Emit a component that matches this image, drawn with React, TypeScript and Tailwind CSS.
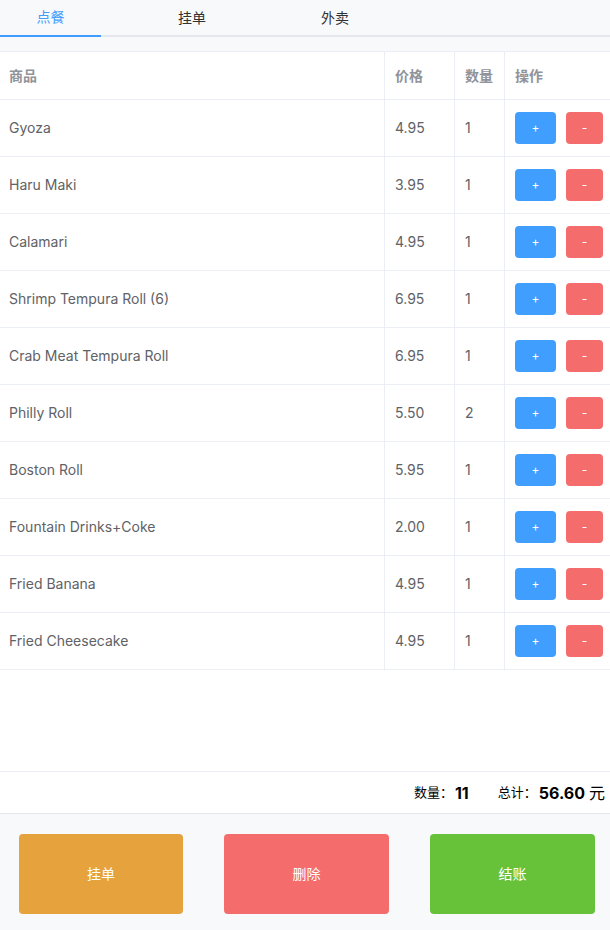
import { useState } from 'react';

interface Item {
    name: string;
    price: string;
    count: number;
}

const initialItems: Item[] = [
    { name: 'Gyoza', price: '4.95', count: 1 },
    { name: 'Haru Maki', price: '3.95', count: 1 },
    { name: 'Calamari', price: '4.95', count: 1 },
    { name: 'Shrimp Tempura Roll (6)', price: '6.95', count: 1 },
    { name: 'Crab Meat Tempura Roll', price: '6.95', count: 1 },
    { name: 'Philly Roll', price: '5.50', count: 2 },
    { name: 'Boston Roll', price: '5.95', count: 1 },
    { name: 'Fountain Drinks+Coke', price: '2.00', count: 1 },
    { name: 'Fried Banana', price: '4.95', count: 1 },
    { name: 'Fried Cheesecake', price: '4.95', count: 1 },
];

const tabs = [
    { label: '点餐', width: 'w-[101px]' },
    { label: '挂单', width: 'w-[182px]' },
    { label: '外卖', width: 'w-[104px]' },
];

export default function App() {
    const [items] = useState<Item[]>(initialItems);
    const [active] = useState(0);

    const totalCount = items.reduce((s, i) => s + i.count, 0);
    const totalPrice = items.reduce((s, i) => s + i.count * parseFloat(i.price), 0);

    return (
        <div
            className="w-[610px] h-[930px] flex flex-col bg-[#f8f9fb] overflow-hidden"
            style={{ fontFamily: 'Inter, "Noto Sans CJK SC", sans-serif' }}
        >
            {/* Tabs */}
            <div className="flex h-[37px] border-b-2 border-[#e4e7ed]">
                {tabs.map((t, i) => (
                    <div
                        key={t.label}
                        className={`-mb-[2px] h-[37px] pb-[2px] flex items-center justify-center text-sm ${t.width} ${
                            i === active
                                ? 'text-[#409eff] border-b-2 border-[#409eff]'
                                : 'text-[#303133]'
                        }`}
                    >
                        {t.label}
                    </div>
                ))}
            </div>

            {/* Order table */}
            <div className="mt-[14px] bg-white border-t border-[#ebeef5] flex-1 flex flex-col">
                <div className="grid grid-cols-[385px_70px_50px_105px] h-[48px] border-b border-[#ebeef5] text-sm font-bold text-[#909399]">
                    <div className="flex items-center pl-[9px] border-r border-[#ebeef5]">商品</div>
                    <div className="flex items-center pl-[10px] border-r border-[#ebeef5]">价格</div>
                    <div className="flex items-center pl-[10px] border-r border-[#ebeef5]">数量</div>
                    <div className="flex items-center pl-[10px]">操作</div>
                </div>
                {items.map((item) => (
                    <div
                        key={item.name}
                        className="grid grid-cols-[385px_70px_50px_105px] h-[57px] border-b border-[#ebeef5] text-sm text-[#606266]"
                    >
                        <div className="flex items-center pl-[9px] border-r border-[#ebeef5]">{item.name}</div>
                        <div className="flex items-center pl-[10px] border-r border-[#ebeef5]">{item.price}</div>
                        <div className="flex items-center pl-[10px] border-r border-[#ebeef5]">{item.count}</div>
                        <div className="flex items-center pl-[10px] gap-[10px]">
                            <button className="w-[41px] h-[32px] rounded bg-[#409eff] text-white text-xs">+</button>
                            <button className="w-[37px] h-[32px] rounded bg-[#f56c6c] text-white text-xs">-</button>
                        </div>
                    </div>
                ))}
                <div className="flex-1" />

                {/* Totals */}
                <div className="h-[43px] border-t border-[#ebeef5] border-b border-b-[#e4e7ed] flex items-center justify-end pr-[5px] text-black">
                    <span className="text-[13px]">数量：</span>
                    <span className="text-[16px] font-bold ml-[2px]">{totalCount}</span>
                    <span className="text-[13px] ml-[29px]">总计：</span>
                    <span className="text-[16px] font-bold ml-[2px]">{totalPrice.toFixed(2)}</span>
                    <span className="text-[16px] ml-[4px]">元</span>
                </div>
            </div>

            {/* Actions */}
            <div className="h-[116px] flex items-start pt-[20px] pl-[19px] gap-[41px]">
                <button className="w-[164px] h-[80px] rounded bg-[#e6a23c] text-white text-sm">挂单</button>
                <button className="w-[165px] h-[80px] rounded bg-[#f56c6c] text-white text-sm">删除</button>
                <button className="w-[165px] h-[80px] rounded bg-[#67c23a] text-white text-sm">结账</button>
            </div>
        </div>
    );
}
